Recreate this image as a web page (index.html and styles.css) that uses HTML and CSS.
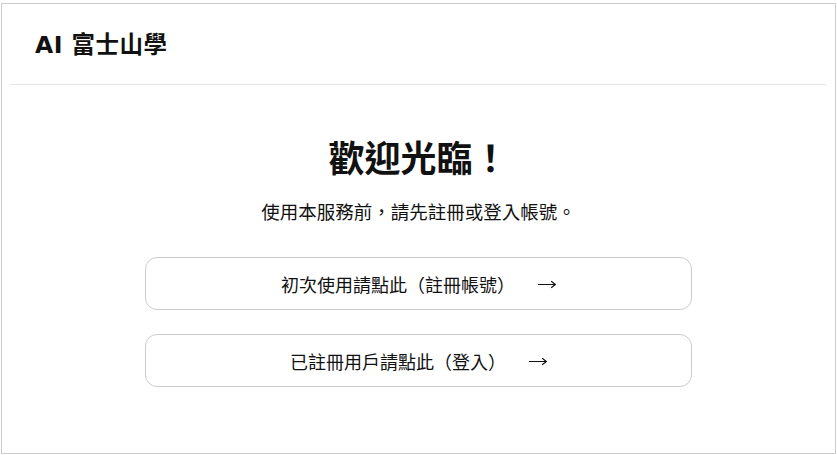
FILE: index.html
```html
<!DOCTYPE html>
<html lang="zh-Hant">
<head>
<meta charset="utf-8">
<title>AI 富士山學</title>
<link rel="stylesheet" href="styles.css">
</head>
<body>
<div class="frame">
  <header class="topbar">
    <div class="brand">AI 富士山學</div>
  </header>
  <main class="welcome">
    <h1 class="title">歡迎光臨！</h1>
    <p class="lead">使用本服務前，請先註冊或登入帳號。</p>
    <div class="actions">
      <a class="action" href="#">初次使用請點此（註冊帳號）<svg class="arrow" width="18" height="10" viewBox="0 0 18 10" aria-hidden="true"><path d="M0 5.5H17.2M13.2 2.3L17.4 5.5L13.2 8.7" fill="none" stroke="#111" stroke-width="1.2"/></svg></a>
      <a class="action" href="#">已註冊用戶請點此（登入）<svg class="arrow" width="18" height="10" viewBox="0 0 18 10" aria-hidden="true"><path d="M0 5.5H17.2M13.2 2.3L17.4 5.5L13.2 8.7" fill="none" stroke="#111" stroke-width="1.2"/></svg></a>
    </div>
  </main>
</div>
</body>
</html>
```

FILE: styles.css
```css
html, body {
  margin: 0;
  padding: 0;
  background: #ffffff;
}

body {
  font-family: "DejaVu Sans", "Noto Sans CJK TC", sans-serif;
  color: #111111;
}

.frame {
  margin: 3px 1px 0 1px;
  border: 1px solid #cccccc;
  box-sizing: border-box;
  height: 451px;
}

.topbar {
  margin: 0 9px 0 8px;
  height: 81px;
  border-bottom: 1px solid #e5e5e5;
  box-sizing: border-box;
  display: flex;
  align-items: center;
  padding: 0 0 2px 25px;
}

.brand {
  font-size: 23.5px;
  font-weight: 700;
  letter-spacing: 0.5px;
}

.welcome {
  display: flex;
  flex-direction: column;
  align-items: center;
  padding-top: 49px;
}

.title {
  margin: 0;
  font-family: "Noto Sans CJK TC", sans-serif;
  font-size: 36px;
  line-height: 44px;
  font-weight: 700;
  color: #111111;
}

.lead {
  margin: 20px 0 0 0;
  font-family: "Noto Sans CJK TC", sans-serif;
  font-size: 18.5px;
  line-height: 26px;
  color: #111111;
}

.actions {
  margin-top: 33px;
  display: flex;
  flex-direction: column;
  gap: 24px;
}

.action {
  width: 547px;
  height: 53px;
  box-sizing: border-box;
  border: 1px solid #cccccc;
  border-radius: 12px;
  display: flex;
  align-items: center;
  justify-content: center;
  font-family: "Noto Sans CJK TC", sans-serif;
  font-size: 18px;
  color: #111111;
  text-decoration: none;
  background: #ffffff;
}

.arrow {
  display: block;
  margin-left: 23px;
  margin-top: 1px;
  flex: none;
}
```
